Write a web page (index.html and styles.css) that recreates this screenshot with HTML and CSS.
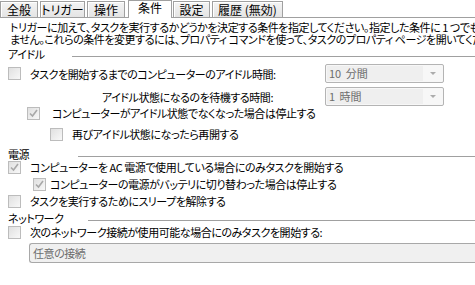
FILE: index.html
```html
<!DOCTYPE html>
<html lang="ja">
<head>
	<meta charset="UTF-8">
	<title>条件</title>
	<link rel="stylesheet" href="styles.css">
</head>
<body>
	<!-- タブ -->
	<ul class="tabs">
		<li class="t1">全般</li>
		<li class="t2">トリガー</li>
		<li class="t3">操作</li>
		<li class="t4 cur">条件</li>
		<li class="t5">設定</li>
		<li class="t6">履歴 (無効)</li>
	</ul>

	<div class="page">
		<p class="desc">
			<span>トリガーに加えて、タスクを実行するかどうかを決定する条件を指定してください。指定した条件に 1 つでも該当しない場合、タスクは実行され</span>
			<span>ません。これらの条件を変更するには、プロパティ コマンドを使って、タスクのプロパティ ページを開いてください。</span>
		</p>

		<!-- アイドル -->
		<div class="title idle"><span>アイドル</span><i class="rule"></i></div>
		<div class="row field first">
			<label class="field-label"><span class="cb"></span>タスクを開始するまでのコンピューターのアイドル時間:</label>
			<div class="select"><span>10 分間</span><i></i></div>
		</div>
		<div class="row field second">
			<label class="field-label right">アイドル状態になるのを待機する時間:</label>
			<div class="select"><span>1 時間</span><i></i></div>
		</div>
		<div class="row lv1">
			<span class="cb on"><svg width="9" height="9" viewBox="0 0 9 9"><path d="M1 4.5l2.5 2.5 4.5-6"/></svg></span>
			コンピューターがアイドル状態でなくなった場合は停止する
		</div>
		<div class="row lv2 gap7">
			<span class="cb"></span>
			再びアイドル状態になったら再開する
		</div>

		<!-- 電源 -->
		<div class="title power"><span>電源</span><i class="rule"></i></div>
		<div class="row">
			<span class="cb on"><svg width="9" height="9" viewBox="0 0 9 9"><path d="M1 4.5l2.5 2.5 4.5-6"/></svg></span>
			コンピューターを AC 電源で使用している場合にのみタスクを開始する
		</div>
		<div class="row lv3 gap3">
			<span class="cb on"><svg width="9" height="9" viewBox="0 0 9 9"><path d="M1 4.5l2.5 2.5 4.5-6"/></svg></span>
			コンピューターの電源がバッテリに切り替わった場合は停止する
		</div>
		<div class="row gap3">
			<span class="cb"></span>
			タスクを実行するためにスリープを解除する
		</div>

		<!-- ネットワーク -->
		<div class="title net"><span>ネットワーク</span><i class="rule"></i></div>
		<div class="row">
			<span class="cb"></span>
			次のネットワーク接続が使用可能な場合にのみタスクを開始する:
		</div>
		<div class="combo">任意の接続</div>
	</div>
</body>
</html>
```

FILE: styles.css
```css
body{
	margin:0;
	width:475px;
	height:285px;
	overflow:hidden;
	background:#fff;
	color:#000;
	font-family:"Noto Sans CJK JP","Liberation Sans",sans-serif;
	font-size:11px;
	letter-spacing:-0.45px;
	font-feature-settings:"palt";
}

/* タブ */
.tabs{
	display:flex;
	align-items:flex-end;
	margin:0;
	padding:0;
	list-style:none;
	height:17px;
	border-bottom:1px solid #a0a0a0;
}
.tabs li{
	box-sizing:border-box;
	height:16px;
	line-height:15px;
	margin-right:2px;
	border:1px solid #a0a0a0;
	border-bottom:0;
	background:linear-gradient(#f4f4f4,#e4e4e4);
	box-shadow:inset 1px 1px 0 #fff;
	font-size:12px;
	letter-spacing:0;
	text-align:center;
	white-space:nowrap;
}
.tabs .t1{ width:38px; }
.tabs .t2{ width:45px; }
.tabs .t3{ width:38px; }
.tabs .t4{ width:44px; }
.tabs .t5{ width:37px; }
.tabs .t6{ width:71px; }
.tabs .cur{
	height:18px;
	line-height:14px;
	margin:0 1px -1px 1px;
	background:#fff;
	box-shadow:none;
}

.page{
	padding-left:8px;
}
.desc{
	margin:3px 0 0;
	padding-left:2px;
	line-height:12px;
	white-space:nowrap;
	overflow:hidden;
}
.desc span{
	display:block;
}

/* 区切り見出し */
.title{
	display:flex;
	align-items:center;
	height:14px;
	margin-top:2px;
	white-space:nowrap;
}
.title span{
	flex:none;
}
.title .rule{
	flex:1;
	height:0;
	border-top:1px solid #a0a0a0;
	margin-top:4px;
}
.title.idle span{ width:64px; }
.title.power span{ width:70px; }
.title.net span{ width:80px; }
.title.power{
	height:12px;
	margin-top:7px;
}
.title.net{
	margin-top:3px;
}

/* チェックボックス行 */
.row{
	display:flex;
	align-items:center;
	gap:9px;
	height:14px;
	white-space:nowrap;
}
.row.lv1{ margin-left:19px; gap:12px; }
.row.lv2{ margin-left:42px; }
.row.lv3{ margin-left:25px; gap:4px; }
.row.gap3{ margin-top:3px; }
.row.gap7{ margin-top:7px; }

.cb{
	flex:none;
	display:flex;
	align-items:center;
	justify-content:center;
	width:11px;
	height:11px;
	border:1px solid #bcbcbc;
	background:linear-gradient(135deg,#e0e0e0,#f8f8f8);
}
.cb svg path{
	fill:none;
	stroke:#a8a8a8;
	stroke-width:1.6;
}

/* アイドル時間 */
.field{
	height:19px;
	gap:0;
}
.field.first{ margin-top:3px; }
.field.second{ margin-top:4px; }
.field-label{
	display:flex;
	align-items:center;
	gap:9px;
	width:265px;
}
.field-label.right{
	justify-content:flex-end;
}
.select{
	display:flex;
	width:117px;
	height:17px;
	margin-left:52px;
	border:1px solid #b4b4b4;
	border-radius:2px;
	background:#f7f7f7;
}
.select span{
	flex:1;
	margin:1px 0 1px 1px;
	padding-left:2px;
	line-height:15px;
	background:#efefef;
	color:#6d6d6d;
	letter-spacing:0;
	word-spacing:2px;
}
.select i{
	width:20px;
	position:relative;
}
.select i::before{
	content:"";
	position:absolute;
	left:7px;
	top:7px;
	border-left:3px solid transparent;
	border-right:3px solid transparent;
	border-top:3px solid #acacac;
}

.combo{
	margin:4px 0 0 21px;
	height:18px;
	line-height:18px;
	padding-left:3px;
	border:1px solid #a8a8a8;
	border-right:0;
	border-radius:3px 0 0 3px;
	background:#f0f0f0;
	color:#6d6d6d;
}
```
